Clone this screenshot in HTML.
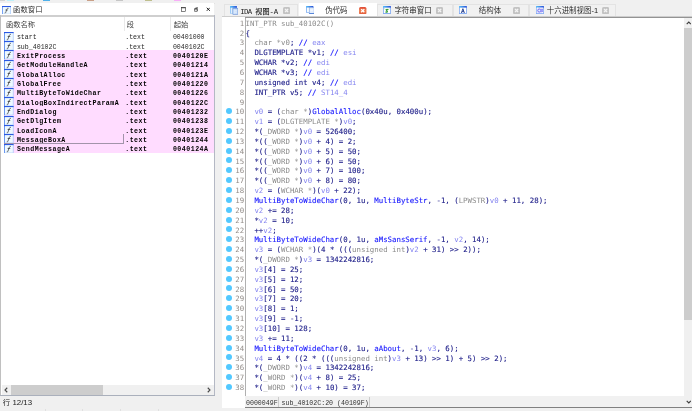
<!DOCTYPE html>
<html lang="zh-CN"><head><meta charset="utf-8"><title>IDA</title>
<style>
html,body{margin:0;padding:0;}
body{width:692px;height:411px;overflow:hidden;background:#f0f0f0;position:relative;font-family:"Liberation Sans","Noto Sans CJK SC",sans-serif;}
.a{position:absolute;}
.cj{font-family:"Liberation Mono","Noto Serif CJK SC",serif;font-size:7.25px;color:#222;white-space:pre;line-height:10px;}
.ui{font-family:"Liberation Sans","Noto Sans CJK SC",sans-serif;font-weight:350;font-size:7.2px;color:#1a1a1a;white-space:pre;line-height:10px;}
.fn{font-family:"Liberation Mono","Noto Serif CJK SC",monospace;font-size:6.6px;color:#262626;white-space:pre;line-height:9.34px;height:9.34px;}
.fb{font-weight:bold;color:#000;letter-spacing:0.49px;}
.code{font-family:"DejaVu Sans Mono","Liberation Mono",monospace;font-size:7.39px;white-space:pre;line-height:9.83px;height:9.83px;}
.g{color:#8a8a8a}.n{color:#20208a;-webkit-text-stroke:0.12px #20208a}.b{color:#1a1aff;-webkit-text-stroke:0.13px #1a1aff}.l{color:#8585f0}
.ln{font-family:"DejaVu Sans Mono","Liberation Mono",monospace;font-size:7.39px;color:#918b87;text-align:right;width:20px;line-height:9.83px;height:9.83px;}
.dot{width:6px;height:6px;border-radius:50%;background:#52c8ff;}
.tab{top:4px;height:13px;background:#f1f1f1;border:0.6px solid #e3e3e3;border-bottom:none;box-sizing:border-box;}
.cb{width:6.6px;height:6.6px;border-radius:1.2px;background:#c6c6c6;top:7.4px;}
.cb svg,.cr svg{position:absolute;left:0;top:0;width:100%;height:100%;}
.cr{width:7.2px;height:7px;border-radius:1.3px;background:#e8704d;top:7.2px;}
.ico{width:9px;height:9px;}
</style></head><body>
<div id="w" style="position:absolute;left:0;top:0;width:692px;height:411px;overflow:hidden;will-change:transform">

<div class="a" style="left:0px;top:0;width:4.6px;height:0.8px;background:#d4d4d4"></div>
<div class="a" style="left:6.5px;top:0;width:7.2px;height:0.8px;background:#bff0f8"></div>
<div class="a" style="left:43px;top:0;width:7.1px;height:0.8px;background:#4fb0ea"></div>
<div class="a" style="left:87.1px;top:0;width:6.9px;height:0.8px;background:#c9a088"></div>
<div class="a" style="left:115.9px;top:0;width:7.2px;height:0.8px;background:#c6c6c6"></div>
<div class="a" style="left:145.1px;top:0;width:7.2px;height:0.8px;background:#bfbf8e"></div>
<div class="a" style="left:174.1px;top:0;width:7.3px;height:0.8px;background:#f8aef8"></div>
<div class="a" style="left:0;top:2.7px;width:215px;height:0.7px;background:#e2e2e2"></div>
<div class="a" style="left:0;top:3.3px;width:214.2px;height:12.2px;background:#fff"></div>
<div class="a" style="left:0;top:15.4px;width:215px;height:1.6px;background:#cfcfcf"></div>
<div class="a" style="left:0;top:17px;width:215px;height:378.5px;background:#fff"></div>
<div class="a" style="left:0.2px;top:15.4px;width:1.2px;height:380px;background:#c0c0c0"></div>
<div class="a" style="left:213.9px;top:15.4px;width:1px;height:380px;background:#b4b8c4"></div>
<div class="a" style="left:0;top:394.7px;width:215px;height:1px;background:#aab0bc"></div>
<svg class="a" style="left:2.0px;top:5.7px;width:9.0px;height:8.4px" viewBox="0 0 20 20" preserveAspectRatio="none"><rect x="0" y="0" width="20" height="20" fill="#a9c9fa"/><rect x="0" y="0" width="2" height="20" fill="#6492f0"/><rect x="0" y="0" width="20" height="2.6" fill="#2a58e2"/><rect x="2" y="2.6" width="16.4" height="16" fill="#eef9ff"/><path d="M14.6 5.4c-1.800-.8-3 .1-3.600 1.900l-2.700 8c-.5 1.500-1.300 1.900-2.500 1.500M7.600 9.600h5.400" stroke="#1e1e1e" stroke-width="1.35" fill="none"/></svg>
<div class="a ui" style="left:13.1px;top:5.1px;font-size:7.35px;">函数窗口</div>
<svg class="a" style="left:181px;top:7.1px;width:5.3px;height:5.1px" viewBox="0 0 12 12"><rect x="1.4" y="1.6" width="9" height="8.6" fill="none" stroke="#222" stroke-width="1.3"/><rect x="1.4" y="1.2" width="9" height="1.6" fill="#222"/></svg>
<svg class="a" style="left:193.6px;top:7.1px;width:4.8px;height:5.1px" viewBox="0 0 12 12"><path d="M4 1.5h6.5v6.5h-2.2M1.5 4h6.5v6.5h-6.5z" fill="none" stroke="#222" stroke-width="1.5"/><path d="M1.5 4.4h6.5" stroke="#222" stroke-width="2"/></svg>
<svg class="a" style="left:205.8px;top:7.3px;width:4.6px;height:4.6px" viewBox="0 0 10 10"><path d="M1.6 1.6L8.4 8.4M8.4 1.6L1.6 8.4" stroke="#1c1c1c" stroke-width="2.1"/></svg>
<div class="a ui" style="left:5.9px;top:20.1px;font-size:7.3px;color:#333">函数名称</div>
<div class="a ui" style="left:126.8px;top:20.1px;font-size:7.3px;color:#333">段</div>
<div class="a ui" style="left:173.8px;top:20.1px;font-size:7.3px;color:#333">起始</div>
<div class="a" style="left:123.5px;top:17.4px;width:0.7px;height:14px;background:#e9e9e9"></div>
<div class="a" style="left:170.3px;top:17.4px;width:0.7px;height:14px;background:#e9e9e9"></div>
<svg class="a" style="left:4.3px;top:31.7px;width:9.6px;height:9.34px" viewBox="0 0 20 20" preserveAspectRatio="none"><rect x="0" y="0" width="20" height="20" fill="#a9c9fa"/><rect x="0" y="0" width="2" height="20" fill="#6492f0"/><rect x="0" y="0" width="20" height="2.6" fill="#2a58e2"/><rect x="2" y="2.6" width="16.4" height="16" fill="#eef9ff"/><path d="M14.6 5.4c-1.800-.8-3 .1-3.600 1.900l-2.700 8c-.5 1.500-1.300 1.900-2.500 1.500M7.600 9.600h5.400" stroke="#1e1e1e" stroke-width="1.35" fill="none"/></svg>
<div class="a fn" style="left:16.9px;top:33.30px">start</div>
<div class="a fn" style="left:125.2px;top:33.30px">.text</div>
<div class="a fn" style="left:172.9px;top:33.30px">00401000</div>
<svg class="a" style="left:4.3px;top:41.04px;width:9.6px;height:9.34px" viewBox="0 0 20 20" preserveAspectRatio="none"><rect x="0" y="0" width="20" height="20" fill="#a9c9fa"/><rect x="0" y="0" width="2" height="20" fill="#6492f0"/><rect x="0" y="0" width="20" height="2.6" fill="#2a58e2"/><rect x="2" y="2.6" width="16.4" height="16" fill="#eef9ff"/><path d="M14.6 5.4c-1.800-.8-3 .1-3.600 1.900l-2.700 8c-.5 1.500-1.300 1.900-2.500 1.500M7.600 9.600h5.400" stroke="#1e1e1e" stroke-width="1.35" fill="none"/></svg>
<div class="a fn" style="left:16.9px;top:42.64px">sub_40102C</div>
<div class="a fn" style="left:125.2px;top:42.64px">.text</div>
<div class="a fn" style="left:172.9px;top:42.64px">0040102C</div>
<div class="a" style="left:4px;top:50.38px;width:210px;height:9.39px;background:#ffdcff"></div>
<svg class="a" style="left:4.3px;top:50.38px;width:9.6px;height:9.34px" viewBox="0 0 20 20" preserveAspectRatio="none"><rect x="0" y="0" width="20" height="20" fill="#a9c9fa"/><rect x="0" y="0" width="2" height="20" fill="#6492f0"/><rect x="0" y="0" width="20" height="2.6" fill="#2a58e2"/><rect x="2" y="2.6" width="16.4" height="16" fill="#eef9ff"/><path d="M14.6 5.4c-1.800-.8-3 .1-3.600 1.900l-2.700 8c-.5 1.500-1.300 1.900-2.500 1.500M7.600 9.600h5.400" stroke="#1e1e1e" stroke-width="1.35" fill="none"/></svg>
<div class="a fn fb" style="left:16.9px;top:51.98px">ExitProcess</div>
<div class="a fn fb" style="left:125.2px;top:51.98px">.text</div>
<div class="a fn fb" style="left:172.9px;top:51.98px">0040120E</div>
<div class="a" style="left:4px;top:59.72px;width:210px;height:9.39px;background:#ffdcff"></div>
<svg class="a" style="left:4.3px;top:59.72px;width:9.6px;height:9.34px" viewBox="0 0 20 20" preserveAspectRatio="none"><rect x="0" y="0" width="20" height="20" fill="#a9c9fa"/><rect x="0" y="0" width="2" height="20" fill="#6492f0"/><rect x="0" y="0" width="20" height="2.6" fill="#2a58e2"/><rect x="2" y="2.6" width="16.4" height="16" fill="#eef9ff"/><path d="M14.6 5.4c-1.800-.8-3 .1-3.600 1.900l-2.700 8c-.5 1.500-1.300 1.900-2.500 1.500M7.600 9.600h5.400" stroke="#1e1e1e" stroke-width="1.35" fill="none"/></svg>
<div class="a fn fb" style="left:16.9px;top:61.32px">GetModuleHandleA</div>
<div class="a fn fb" style="left:125.2px;top:61.32px">.text</div>
<div class="a fn fb" style="left:172.9px;top:61.32px">00401214</div>
<div class="a" style="left:4px;top:69.06px;width:210px;height:9.39px;background:#ffdcff"></div>
<svg class="a" style="left:4.3px;top:69.06px;width:9.6px;height:9.34px" viewBox="0 0 20 20" preserveAspectRatio="none"><rect x="0" y="0" width="20" height="20" fill="#a9c9fa"/><rect x="0" y="0" width="2" height="20" fill="#6492f0"/><rect x="0" y="0" width="20" height="2.6" fill="#2a58e2"/><rect x="2" y="2.6" width="16.4" height="16" fill="#eef9ff"/><path d="M14.6 5.4c-1.800-.8-3 .1-3.600 1.900l-2.700 8c-.5 1.500-1.300 1.900-2.500 1.500M7.600 9.600h5.400" stroke="#1e1e1e" stroke-width="1.35" fill="none"/></svg>
<div class="a fn fb" style="left:16.9px;top:70.66px">GlobalAlloc</div>
<div class="a fn fb" style="left:125.2px;top:70.66px">.text</div>
<div class="a fn fb" style="left:172.9px;top:70.66px">0040121A</div>
<div class="a" style="left:4px;top:78.40px;width:210px;height:9.39px;background:#ffdcff"></div>
<svg class="a" style="left:4.3px;top:78.4px;width:9.6px;height:9.34px" viewBox="0 0 20 20" preserveAspectRatio="none"><rect x="0" y="0" width="20" height="20" fill="#a9c9fa"/><rect x="0" y="0" width="2" height="20" fill="#6492f0"/><rect x="0" y="0" width="20" height="2.6" fill="#2a58e2"/><rect x="2" y="2.6" width="16.4" height="16" fill="#eef9ff"/><path d="M14.6 5.4c-1.800-.8-3 .1-3.600 1.900l-2.700 8c-.5 1.500-1.300 1.900-2.500 1.500M7.600 9.600h5.400" stroke="#1e1e1e" stroke-width="1.35" fill="none"/></svg>
<div class="a fn fb" style="left:16.9px;top:80.00px">GlobalFree</div>
<div class="a fn fb" style="left:125.2px;top:80.00px">.text</div>
<div class="a fn fb" style="left:172.9px;top:80.00px">00401220</div>
<div class="a" style="left:4px;top:87.74px;width:210px;height:9.39px;background:#ffdcff"></div>
<svg class="a" style="left:4.3px;top:87.74px;width:9.6px;height:9.34px" viewBox="0 0 20 20" preserveAspectRatio="none"><rect x="0" y="0" width="20" height="20" fill="#a9c9fa"/><rect x="0" y="0" width="2" height="20" fill="#6492f0"/><rect x="0" y="0" width="20" height="2.6" fill="#2a58e2"/><rect x="2" y="2.6" width="16.4" height="16" fill="#eef9ff"/><path d="M14.6 5.4c-1.800-.8-3 .1-3.600 1.900l-2.700 8c-.5 1.500-1.300 1.900-2.500 1.500M7.600 9.600h5.400" stroke="#1e1e1e" stroke-width="1.35" fill="none"/></svg>
<div class="a fn fb" style="left:16.9px;top:89.34px">MultiByteToWideChar</div>
<div class="a fn fb" style="left:125.2px;top:89.34px">.text</div>
<div class="a fn fb" style="left:172.9px;top:89.34px">00401226</div>
<div class="a" style="left:4px;top:97.08px;width:210px;height:9.39px;background:#ffdcff"></div>
<svg class="a" style="left:4.3px;top:97.08px;width:9.6px;height:9.34px" viewBox="0 0 20 20" preserveAspectRatio="none"><rect x="0" y="0" width="20" height="20" fill="#a9c9fa"/><rect x="0" y="0" width="2" height="20" fill="#6492f0"/><rect x="0" y="0" width="20" height="2.6" fill="#2a58e2"/><rect x="2" y="2.6" width="16.4" height="16" fill="#eef9ff"/><path d="M14.6 5.4c-1.800-.8-3 .1-3.600 1.900l-2.700 8c-.5 1.500-1.300 1.900-2.500 1.500M7.600 9.600h5.400" stroke="#1e1e1e" stroke-width="1.35" fill="none"/></svg>
<div class="a fn fb" style="left:16.9px;top:98.68px">DialogBoxIndirectParamA</div>
<div class="a fn fb" style="left:125.2px;top:98.68px">.text</div>
<div class="a fn fb" style="left:172.9px;top:98.68px">0040122C</div>
<div class="a" style="left:4px;top:106.42px;width:210px;height:9.39px;background:#ffdcff"></div>
<svg class="a" style="left:4.3px;top:106.42px;width:9.6px;height:9.34px" viewBox="0 0 20 20" preserveAspectRatio="none"><rect x="0" y="0" width="20" height="20" fill="#a9c9fa"/><rect x="0" y="0" width="2" height="20" fill="#6492f0"/><rect x="0" y="0" width="20" height="2.6" fill="#2a58e2"/><rect x="2" y="2.6" width="16.4" height="16" fill="#eef9ff"/><path d="M14.6 5.4c-1.800-.8-3 .1-3.600 1.900l-2.700 8c-.5 1.500-1.300 1.900-2.500 1.500M7.600 9.600h5.400" stroke="#1e1e1e" stroke-width="1.35" fill="none"/></svg>
<div class="a fn fb" style="left:16.9px;top:108.02px">EndDialog</div>
<div class="a fn fb" style="left:125.2px;top:108.02px">.text</div>
<div class="a fn fb" style="left:172.9px;top:108.02px">00401232</div>
<div class="a" style="left:4px;top:115.76px;width:210px;height:9.39px;background:#ffdcff"></div>
<svg class="a" style="left:4.3px;top:115.76px;width:9.6px;height:9.34px" viewBox="0 0 20 20" preserveAspectRatio="none"><rect x="0" y="0" width="20" height="20" fill="#a9c9fa"/><rect x="0" y="0" width="2" height="20" fill="#6492f0"/><rect x="0" y="0" width="20" height="2.6" fill="#2a58e2"/><rect x="2" y="2.6" width="16.4" height="16" fill="#eef9ff"/><path d="M14.6 5.4c-1.800-.8-3 .1-3.600 1.900l-2.700 8c-.5 1.500-1.300 1.900-2.500 1.500M7.600 9.600h5.400" stroke="#1e1e1e" stroke-width="1.35" fill="none"/></svg>
<div class="a fn fb" style="left:16.9px;top:117.36px">GetDlgItem</div>
<div class="a fn fb" style="left:125.2px;top:117.36px">.text</div>
<div class="a fn fb" style="left:172.9px;top:117.36px">00401238</div>
<div class="a" style="left:4px;top:125.10px;width:210px;height:9.39px;background:#ffdcff"></div>
<svg class="a" style="left:4.3px;top:125.1px;width:9.6px;height:9.34px" viewBox="0 0 20 20" preserveAspectRatio="none"><rect x="0" y="0" width="20" height="20" fill="#a9c9fa"/><rect x="0" y="0" width="2" height="20" fill="#6492f0"/><rect x="0" y="0" width="20" height="2.6" fill="#2a58e2"/><rect x="2" y="2.6" width="16.4" height="16" fill="#eef9ff"/><path d="M14.6 5.4c-1.800-.8-3 .1-3.600 1.900l-2.700 8c-.5 1.500-1.300 1.900-2.500 1.500M7.600 9.600h5.400" stroke="#1e1e1e" stroke-width="1.35" fill="none"/></svg>
<div class="a fn fb" style="left:16.9px;top:126.70px">LoadIconA</div>
<div class="a fn fb" style="left:125.2px;top:126.70px">.text</div>
<div class="a fn fb" style="left:172.9px;top:126.70px">0040123E</div>
<div class="a" style="left:4px;top:134.44px;width:210px;height:9.39px;background:#ffdcff"></div>
<svg class="a" style="left:4.3px;top:134.44px;width:9.6px;height:9.34px" viewBox="0 0 20 20" preserveAspectRatio="none"><rect x="0" y="0" width="20" height="20" fill="#a9c9fa"/><rect x="0" y="0" width="2" height="20" fill="#6492f0"/><rect x="0" y="0" width="20" height="2.6" fill="#2a58e2"/><rect x="2" y="2.6" width="16.4" height="16" fill="#eef9ff"/><path d="M14.6 5.4c-1.800-.8-3 .1-3.600 1.900l-2.700 8c-.5 1.500-1.300 1.900-2.500 1.500M7.600 9.600h5.400" stroke="#1e1e1e" stroke-width="1.35" fill="none"/></svg>
<div class="a fn fb" style="left:16.9px;top:136.04px">MessageBoxA</div>
<div class="a fn fb" style="left:125.2px;top:136.04px">.text</div>
<div class="a fn fb" style="left:172.9px;top:136.04px">00401244</div>
<div class="a" style="left:4px;top:143.78px;width:210px;height:9.39px;background:#ffdcff"></div>
<svg class="a" style="left:4.3px;top:143.78px;width:9.6px;height:9.34px" viewBox="0 0 20 20" preserveAspectRatio="none"><rect x="0" y="0" width="20" height="20" fill="#a9c9fa"/><rect x="0" y="0" width="2" height="20" fill="#6492f0"/><rect x="0" y="0" width="20" height="2.6" fill="#2a58e2"/><rect x="2" y="2.6" width="16.4" height="16" fill="#eef9ff"/><path d="M14.6 5.4c-1.800-.8-3 .1-3.600 1.900l-2.700 8c-.5 1.500-1.300 1.900-2.500 1.500M7.600 9.600h5.400" stroke="#1e1e1e" stroke-width="1.35" fill="none"/></svg>
<div class="a fn fb" style="left:16.9px;top:145.38px">SendMessageA</div>
<div class="a fn fb" style="left:125.2px;top:145.38px">.text</div>
<div class="a fn fb" style="left:172.9px;top:145.38px">0040124A</div>
<div class="a" style="left:4px;top:143.04px;width:119.6px;height:0.7px;background:#a294aa"></div>
<div class="a" style="left:123.2px;top:134.44px;width:0.7px;height:9.2px;background:#a294aa"></div>
<div class="a" style="left:1.6px;top:384.8px;width:212.4px;height:9.8px;background:#f0f0f0"></div>
<div class="a" style="left:11.4px;top:384.8px;width:91.6px;height:9.8px;background:#cdcdcd"></div>
<svg class="a" style="left:3.9px;top:386.8px;width:4px;height:6px" viewBox="0 0 8 12"><path d="M6.5 1.500L2 6l4.500 4.500" fill="none" stroke="#484848" stroke-width="2.2"/></svg>
<svg class="a" style="left:207.4px;top:386.8px;width:4px;height:6px" viewBox="0 0 8 12"><path d="M1.500 1.500L6 6 1.500 10.500" fill="none" stroke="#484848" stroke-width="2.2"/></svg>
<div class="a ui" style="left:2.8px;top:398.2px;font-size:7.9px;font-weight:400;color:#222"><span style="font-size:7.4px">行</span> 12/13</div>
<div class="a" style="left:45.2px;top:409.2px;width:0.7px;height:1.8px;background:#e0e0e0"></div>
<div class="a" style="left:82.3px;top:409.2px;width:0.7px;height:1.8px;background:#e0e0e0"></div>
<div class="a" style="left:120.3px;top:409.2px;width:0.7px;height:1.8px;background:#e0e0e0"></div>
<div class="a" style="left:157.5px;top:409.2px;width:0.7px;height:1.8px;background:#e0e0e0"></div>
<div class="a tab" style="left:223.7px;width:74.3px"></div>
<div class="a" style="left:298.6px;top:3.2px;width:78px;height:14px;background:#fff"></div>
<div class="a tab" style="left:376.5px;width:76.2px"></div>
<div class="a tab" style="left:452.7px;width:76.4px"></div>
<div class="a tab" style="left:529.1px;width:87.4px"></div>
<div class="a" style="left:222.2px;top:17px;width:462px;height:379.2px;background:#fff"></div>
<div class="a" style="left:222.2px;top:396px;width:23px;height:12px;background:#fff"></div>
<div class="a" style="left:222px;top:16.3px;width:470px;height:0.9px;background:#cdcdcd"></div>
<div class="a" style="left:245.2px;top:17.1px;width:446.8px;height:0.9px;background:#939393"></div>
<div class="a" style="left:245.1px;top:17.6px;width:0.7px;height:379px;background:#b0b0b0"></div>
<svg class="a" style="left:229.9px;top:5.9px;width:8.2px;height:8.7px" viewBox="0 0 16.4 17.4"><defs><linearGradient id="tg" x1="0" y1="0" x2="1" y2="0"><stop offset="0" stop-color="#58c4f8"/><stop offset="1" stop-color="#2a4cd6"/></linearGradient></defs><rect x="0" y="0" width="14" height="15.4" rx="1" fill="#9ccaf6"/><rect x="0" y="0" width="14" height="3.4" rx="1" fill="url(#tg)"/><rect x="2.6" y="3.4" width="2.2" height="11" fill="#fff"/><rect x="5.8" y="5" width="10" height="11.8" fill="#c6dcf8" stroke="#6a90d6" stroke-width="1.2"/><path d="M8.4 7v8M10 9.5h3.6M10 12.5h3.6" stroke="#eef5ff" stroke-width="1.5"/></svg>
<div class="a cj" style="left:240.3px;top:6.6px;font-size:7.3px;color:#1a1a1a"><span style="letter-spacing:-0.63px">IDA </span><span style="font-family:'Liberation Sans','Noto Sans CJK SC',sans-serif;font-weight:500;font-size:7.1px">视图</span><span style="letter-spacing:-0.2px">-A</span></div>
<svg class="a" style="left:282.5px;top:7px;width:7.2px;height:7.2px" viewBox="0 0 14 14"><rect x="0" y="0" width="14" height="14" rx="3" fill="#c3c3c3"/><path d="M4 4L10 10M10 4L4 10" stroke="#f4f4f4" stroke-width="2.6"/></svg>
<svg class="a" style="left:305.9px;top:5.9px;width:8.4px;height:8px" viewBox="0 0 16.8 16"><rect x="0" y="0" width="14.6" height="13.6" rx="1" fill="#7aaaf2"/><rect x="0" y="0" width="14.6" height="3.2" rx="1" fill="url(#tg)"/><rect x="1.6" y="3.2" width="11.4" height="9" fill="#f4fbff"/><rect x="6.4" y="3.4" width="10" height="12.2" fill="#d4e4fa" stroke="#7a9ee0" stroke-width="1"/><path d="M8.2 6.5h6.4M8.2 9.3h6.4M8.2 12.1h6.4" stroke="#fff" stroke-width="1.5"/><rect x="6.4" y="14" width="10" height="1.8" fill="#4f7fd8"/></svg>
<div class="a ui" style="left:325.2px;top:6.2px;font-size:7.45px">伪代码</div>
<svg class="a" style="left:359.4px;top:6.8px;width:7.5px;height:7.4px" viewBox="0 0 14 14"><defs><linearGradient id="rg" x1="0" y1="0" x2="0" y2="1"><stop offset="0" stop-color="#df4a38"/><stop offset="0.5" stop-color="#f0814f"/><stop offset="1" stop-color="#e0583a"/></linearGradient></defs><rect x="0" y="0" width="14" height="14" rx="3" fill="url(#rg)"/><path d="M4 4L10 10M10 4L4 10" stroke="#fff" stroke-width="2.6"/></svg>
<svg class="a" style="left:383px;top:5.95px;width:7.9px;height:7.9px" viewBox="0 0 16 16" preserveAspectRatio="none"><rect x="0" y="0" width="16" height="16" rx="1" fill="#6c9cf0"/><rect x="0" y="0" width="16" height="3.6" rx="1" fill="url(#tg)"/><rect x="1.4" y="3.4" width="13.2" height="11.2" fill="#fff"/><path d="M3.2 5.6l2 1.4M12.8 5.6l-2 1.4" stroke="#79c060" stroke-width="1.6"/><path d="M10.6 7.6c-2.6-1.6-5.6.2-3 1.8s1.200 3.800-2.600 2.600" fill="none" stroke="#36a03c" stroke-width="2.4"/></svg>
<div class="a ui" style="left:394.4px;top:6.2px;font-size:7.45px">字符串窗口</div>
<svg class="a" style="left:436px;top:7px;width:7.2px;height:7.2px" viewBox="0 0 14 14"><rect x="0" y="0" width="14" height="14" rx="3" fill="#c3c3c3"/><path d="M4 4L10 10M10 4L4 10" stroke="#f4f4f4" stroke-width="2.6"/></svg>
<svg class="a" style="left:459.4px;top:5.95px;width:7.8px;height:7.9px" viewBox="0 0 16 16" preserveAspectRatio="none"><rect x="0" y="0" width="16" height="16" rx="1" fill="#6c9cf0"/><rect x="0" y="0" width="16" height="3.6" rx="1" fill="url(#tg)"/><rect x="1.4" y="3.4" width="13.2" height="11.2" fill="#fff"/><path d="M5 14.2L8 5.400l3 8.800M6 11.400h4" fill="none" stroke="#27408e" stroke-width="1.9"/></svg>
<div class="a ui" style="left:478.8px;top:6.2px;font-size:7.45px">结构体</div>
<svg class="a" style="left:513px;top:7px;width:7.2px;height:7.2px" viewBox="0 0 14 14"><rect x="0" y="0" width="14" height="14" rx="3" fill="#c3c3c3"/><path d="M4 4L10 10M10 4L4 10" stroke="#f4f4f4" stroke-width="2.6"/></svg>
<svg class="a" style="left:536.1px;top:5.95px;width:7.9px;height:7.9px" viewBox="0 0 16 16" preserveAspectRatio="none"><rect x="0" y="0" width="16" height="16" rx="1" fill="#6c9cf0"/><rect x="0" y="0" width="16" height="3.6" rx="1" fill="url(#tg)"/><rect x="1.4" y="3.4" width="13.2" height="11.2" fill="#fff"/><rect x="1.7" y="3.6" width="12.6" height="10.8" fill="#e4e2fd"/><circle cx="6.6" cy="9.2" r="3" fill="#e6f4ff" stroke="#6c66f2" stroke-width="1.9"/><path d="M10.6 5.800l3.200 6.800M13.800 5.800l-3.200 6.800" stroke="#8a84f6" stroke-width="1.7"/><rect x="1.7" y="3.600" width="1.800" height="1.800" fill="#fff"/><rect x="12.500" y="12.600" width="1.800" height="1.800" fill="#fff"/></svg>
<div class="a ui" style="left:546.8px;top:6.2px;font-size:7.45px">十六进制视图-1</div>
<svg class="a" style="left:601.6px;top:7px;width:7.2px;height:7.2px" viewBox="0 0 14 14"><rect x="0" y="0" width="14" height="14" rx="3" fill="#c3c3c3"/><path d="M4 4L10 10M10 4L4 10" stroke="#f4f4f4" stroke-width="2.6"/></svg>
<div class="a ln" style="left:224.2px;top:18.80px">1</div>
<div class="a code" style="left:245.5px;top:18.80px"><span class="g">INT_PTR sub_40102C()</span></div>
<div class="a ln" style="left:224.2px;top:28.65px">2</div>
<div class="a code" style="left:245.5px;top:28.65px"><span class="n">{</span></div>
<div class="a ln" style="left:224.2px;top:38.49px">3</div>
<div class="a code" style="left:245.5px;top:38.49px"><span class="g">  char *v0</span><span class="n">; </span><span class="b">//</span><span class="l"> eax</span></div>
<div class="a ln" style="left:224.2px;top:48.34px">4</div>
<div class="a code" style="left:245.5px;top:48.34px"><span class="n">  DLGTEMPLATE *v1; </span><span class="b">//</span><span class="l"> esi</span></div>
<div class="a ln" style="left:224.2px;top:58.18px">5</div>
<div class="a code" style="left:245.5px;top:58.18px"><span class="n">  WCHAR *v2; </span><span class="b">//</span><span class="l"> edi</span></div>
<div class="a ln" style="left:224.2px;top:68.03px">6</div>
<div class="a code" style="left:245.5px;top:68.03px"><span class="n">  WCHAR *v3; </span><span class="b">//</span><span class="l"> edi</span></div>
<div class="a ln" style="left:224.2px;top:77.87px">7</div>
<div class="a code" style="left:245.5px;top:77.87px"><span class="n">  unsigned int v4; </span><span class="b">//</span><span class="l"> edi</span></div>
<div class="a ln" style="left:224.2px;top:87.72px">8</div>
<div class="a code" style="left:245.5px;top:87.72px"><span class="n">  INT_PTR v5; </span><span class="b">//</span><span class="l"> ST14_4</span></div>
<div class="a ln" style="left:224.2px;top:97.56px">9</div>
<div class="a ln" style="left:224.2px;top:107.41px">10</div>
<div class="a dot" style="left:225.8px;top:108.25px"></div>
<div class="a code" style="left:245.5px;top:107.41px"><span class="l">  v0</span><span class="n"> = (</span><span class="g">char *</span><span class="n">)</span><span class="b">GlobalAlloc</span><span class="n">(0x40u, 0x400u);</span></div>
<div class="a ln" style="left:224.2px;top:117.25px">11</div>
<div class="a dot" style="left:225.8px;top:118.10px"></div>
<div class="a code" style="left:245.5px;top:117.25px"><span class="l">  v1</span><span class="n"> = (</span><span class="g">DLGTEMPLATE *</span><span class="n">)</span><span class="l">v0</span><span class="n">;</span></div>
<div class="a ln" style="left:224.2px;top:127.09px">12</div>
<div class="a dot" style="left:225.8px;top:127.94px"></div>
<div class="a code" style="left:245.5px;top:127.09px"><span class="n">  *(</span><span class="g">_DWORD *</span><span class="n">)</span><span class="l">v0</span><span class="n"> = 526400;</span></div>
<div class="a ln" style="left:224.2px;top:136.94px">13</div>
<div class="a dot" style="left:225.8px;top:137.79px"></div>
<div class="a code" style="left:245.5px;top:136.94px"><span class="n">  *((</span><span class="g">_WORD *</span><span class="n">)</span><span class="l">v0</span><span class="n"> + 4) = 2;</span></div>
<div class="a ln" style="left:224.2px;top:146.79px">14</div>
<div class="a dot" style="left:225.8px;top:147.64px"></div>
<div class="a code" style="left:245.5px;top:146.79px"><span class="n">  *((</span><span class="g">_WORD *</span><span class="n">)</span><span class="l">v0</span><span class="n"> + 5) = 50;</span></div>
<div class="a ln" style="left:224.2px;top:156.63px">15</div>
<div class="a dot" style="left:225.8px;top:157.48px"></div>
<div class="a code" style="left:245.5px;top:156.63px"><span class="n">  *((</span><span class="g">_WORD *</span><span class="n">)</span><span class="l">v0</span><span class="n"> + 6) = 50;</span></div>
<div class="a ln" style="left:224.2px;top:166.48px">16</div>
<div class="a dot" style="left:225.8px;top:167.33px"></div>
<div class="a code" style="left:245.5px;top:166.48px"><span class="n">  *((</span><span class="g">_WORD *</span><span class="n">)</span><span class="l">v0</span><span class="n"> + 7) = 100;</span></div>
<div class="a ln" style="left:224.2px;top:176.32px">17</div>
<div class="a dot" style="left:225.8px;top:177.17px"></div>
<div class="a code" style="left:245.5px;top:176.32px"><span class="n">  *((</span><span class="g">_WORD *</span><span class="n">)</span><span class="l">v0</span><span class="n"> + 8) = 80;</span></div>
<div class="a ln" style="left:224.2px;top:186.17px">18</div>
<div class="a dot" style="left:225.8px;top:187.02px"></div>
<div class="a code" style="left:245.5px;top:186.17px"><span class="l">  v2</span><span class="n"> = (</span><span class="g">WCHAR *</span><span class="n">)(</span><span class="l">v0</span><span class="n"> + 22);</span></div>
<div class="a ln" style="left:224.2px;top:196.01px">19</div>
<div class="a dot" style="left:225.8px;top:196.86px"></div>
<div class="a code" style="left:245.5px;top:196.01px"><span class="b">  MultiByteToWideChar</span><span class="n">(0, 1u, </span><span class="b">MultiByteStr</span><span class="n">, -1, (</span><span class="g">LPWSTR</span><span class="n">)</span><span class="l">v0</span><span class="n"> + 11, 28);</span></div>
<div class="a ln" style="left:224.2px;top:205.86px">20</div>
<div class="a dot" style="left:225.8px;top:206.71px"></div>
<div class="a code" style="left:245.5px;top:205.86px"><span class="l">  v2</span><span class="n"> += 28;</span></div>
<div class="a ln" style="left:224.2px;top:215.70px">21</div>
<div class="a dot" style="left:225.8px;top:216.55px"></div>
<div class="a code" style="left:245.5px;top:215.70px"><span class="n">  *</span><span class="l">v2</span><span class="n"> = 10;</span></div>
<div class="a ln" style="left:224.2px;top:225.55px">22</div>
<div class="a dot" style="left:225.8px;top:226.40px"></div>
<div class="a code" style="left:245.5px;top:225.55px"><span class="n">  ++</span><span class="l">v2</span><span class="n">;</span></div>
<div class="a ln" style="left:224.2px;top:235.39px">23</div>
<div class="a dot" style="left:225.8px;top:236.24px"></div>
<div class="a code" style="left:245.5px;top:235.39px"><span class="b">  MultiByteToWideChar</span><span class="n">(0, 1u, </span><span class="b">aMsSansSerif</span><span class="n">, -1, </span><span class="l">v2</span><span class="n">, 14);</span></div>
<div class="a ln" style="left:224.2px;top:245.24px">24</div>
<div class="a dot" style="left:225.8px;top:246.09px"></div>
<div class="a code" style="left:245.5px;top:245.24px"><span class="l">  v3</span><span class="n"> = (</span><span class="g">WCHAR *</span><span class="n">)(4 * (((</span><span class="g">unsigned int</span><span class="n">)</span><span class="l">v2</span><span class="n"> + 31) &gt;&gt; 2));</span></div>
<div class="a ln" style="left:224.2px;top:255.08px">25</div>
<div class="a dot" style="left:225.8px;top:255.93px"></div>
<div class="a code" style="left:245.5px;top:255.08px"><span class="n">  *(</span><span class="g">_DWORD *</span><span class="n">)</span><span class="l">v3</span><span class="n"> = 1342242816;</span></div>
<div class="a ln" style="left:224.2px;top:264.93px">26</div>
<div class="a dot" style="left:225.8px;top:265.78px"></div>
<div class="a code" style="left:245.5px;top:264.93px"><span class="l">  v3</span><span class="n">[4] = 25;</span></div>
<div class="a ln" style="left:224.2px;top:274.77px">27</div>
<div class="a dot" style="left:225.8px;top:275.62px"></div>
<div class="a code" style="left:245.5px;top:274.77px"><span class="l">  v3</span><span class="n">[5] = 12;</span></div>
<div class="a ln" style="left:224.2px;top:284.62px">28</div>
<div class="a dot" style="left:225.8px;top:285.47px"></div>
<div class="a code" style="left:245.5px;top:284.62px"><span class="l">  v3</span><span class="n">[6] = 50;</span></div>
<div class="a ln" style="left:224.2px;top:294.46px">29</div>
<div class="a dot" style="left:225.8px;top:295.31px"></div>
<div class="a code" style="left:245.5px;top:294.46px"><span class="l">  v3</span><span class="n">[7] = 20;</span></div>
<div class="a ln" style="left:224.2px;top:304.31px">30</div>
<div class="a dot" style="left:225.8px;top:305.16px"></div>
<div class="a code" style="left:245.5px;top:304.31px"><span class="l">  v3</span><span class="n">[8] = 1;</span></div>
<div class="a ln" style="left:224.2px;top:314.15px">31</div>
<div class="a dot" style="left:225.8px;top:315.00px"></div>
<div class="a code" style="left:245.5px;top:314.15px"><span class="l">  v3</span><span class="n">[9] = -1;</span></div>
<div class="a ln" style="left:224.2px;top:324.00px">32</div>
<div class="a dot" style="left:225.8px;top:324.85px"></div>
<div class="a code" style="left:245.5px;top:324.00px"><span class="l">  v3</span><span class="n">[10] = 128;</span></div>
<div class="a ln" style="left:224.2px;top:333.84px">33</div>
<div class="a dot" style="left:225.8px;top:334.69px"></div>
<div class="a code" style="left:245.5px;top:333.84px"><span class="l">  v3</span><span class="n"> += 11;</span></div>
<div class="a ln" style="left:224.2px;top:343.69px">34</div>
<div class="a dot" style="left:225.8px;top:344.54px"></div>
<div class="a code" style="left:245.5px;top:343.69px"><span class="b">  MultiByteToWideChar</span><span class="n">(0, 1u, </span><span class="b">aAbout</span><span class="n">, -1, </span><span class="l">v3</span><span class="n">, 6);</span></div>
<div class="a ln" style="left:224.2px;top:353.53px">35</div>
<div class="a dot" style="left:225.8px;top:354.38px"></div>
<div class="a code" style="left:245.5px;top:353.53px"><span class="l">  v4</span><span class="n"> = 4 * ((2 * (((</span><span class="g">unsigned int</span><span class="n">)</span><span class="l">v3</span><span class="n"> + 13) &gt;&gt; 1) + 5) &gt;&gt; 2);</span></div>
<div class="a ln" style="left:224.2px;top:363.38px">36</div>
<div class="a dot" style="left:225.8px;top:364.23px"></div>
<div class="a code" style="left:245.5px;top:363.38px"><span class="n">  *(</span><span class="g">_DWORD *</span><span class="n">)</span><span class="l">v4</span><span class="n"> = 1342242816;</span></div>
<div class="a ln" style="left:224.2px;top:373.22px">37</div>
<div class="a dot" style="left:225.8px;top:374.07px"></div>
<div class="a code" style="left:245.5px;top:373.22px"><span class="n">  *(</span><span class="g">_WORD *</span><span class="n">)(</span><span class="l">v4</span><span class="n"> + 8) = 25;</span></div>
<div class="a ln" style="left:224.2px;top:383.07px">38</div>
<div class="a dot" style="left:225.8px;top:383.92px"></div>
<div class="a code" style="left:245.5px;top:383.07px"><span class="n">  *(</span><span class="g">_WORD *</span><span class="n">)(</span><span class="l">v4</span><span class="n"> + 10) = 37;</span></div>
<div class="a" style="left:684.1px;top:17.7px;width:8px;height:389.3px;background:#f0f0f0"></div>
<div class="a" style="left:684.1px;top:28px;width:8px;height:292px;background:#cdcdcd"></div>
<svg class="a" style="left:685.9px;top:21px;width:5.6px;height:4px" viewBox="0 0 12 8"><path d="M1.5 6.5L6 2l4.5 4.5" fill="none" stroke="#3c3c3c" stroke-width="2.5"/></svg>
<svg class="a" style="left:685.9px;top:400.2px;width:5.6px;height:4px" viewBox="0 0 12 8"><path d="M1.5 1.5L6 6l4.5-4.5" fill="none" stroke="#3c3c3c" stroke-width="2.5"/></svg>
<div class="a" style="left:245.2px;top:396px;width:438.9px;height:11px;background:#f1f1f1"></div>
<div class="a" style="left:245.2px;top:407px;width:446.8px;height:1px;background:#808080"></div>
<div class="a fn" style="left:246px;top:398.8px;color:#333">0000049F sub_40102C:20 (40109F)</div>
<div class="a" style="left:278.2px;top:397px;width:0.7px;height:9.6px;background:#cbcbcb"></div>
<div class="a" style="left:368.8px;top:397px;width:0.7px;height:9.6px;background:#cbcbcb"></div>
</div>
</body></html>
